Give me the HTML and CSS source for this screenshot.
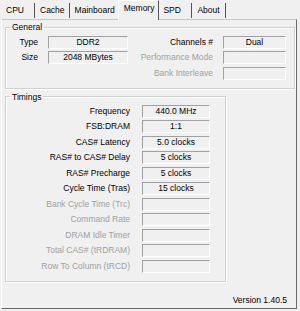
FILE: index.html
```html
<!DOCTYPE html>
<html lang="en">
<head>
  <meta charset="UTF-8" />
  <title>CPU-Z Memory</title>
  <link rel="stylesheet" href="styles.css">
</head>
<body>
  <div class="window">
    <!-- Tabs -->
    <div class="tabs">
      <div class="tab">CPU</div>
      <div class="tab">Cache</div>
      <div class="tab">Mainboard</div>
      <div class="tab active">Memory</div>
      <div class="tab">SPD</div>
      <div class="tab">About</div>
    </div>

    <div class="panel">
      <!-- General -->
      <fieldset class="group general">
        <legend>General</legend>
        <div class="general-grid">
          <span class="label">Type</span>
          <span class="field">DDR2</span>
          <span class="label">Channels #</span>
          <span class="field">Dual</span>

          <span class="label">Size</span>
          <span class="field">2048 MBytes</span>
          <span class="label off">Performance Mode</span>
          <span class="field"></span>

          <span></span>
          <span></span>
          <span class="label off">Bank Interleave</span>
          <span class="field"></span>
        </div>
      </fieldset>

      <!-- Timings -->
      <fieldset class="group timings">
        <legend>Timings</legend>
        <div class="timings-grid">
          <span class="label">Frequency</span><span class="field">440.0 MHz</span>
          <span class="label">FSB:DRAM</span><span class="field">1:1</span>
          <span class="label">CAS# Latency</span><span class="field">5.0 clocks</span>
          <span class="label">RAS# to CAS# Delay</span><span class="field">5 clocks</span>
          <span class="label">RAS# Precharge</span><span class="field">5 clocks</span>
          <span class="label">Cycle Time (Tras)</span><span class="field">15 clocks</span>
          <span class="label off">Bank Cycle Time (Trc)</span><span class="field"></span>
          <span class="label off">Command Rate</span><span class="field"></span>
          <span class="label off">DRAM Idle Timer</span><span class="field"></span>
          <span class="label off">Total CAS# (tRDRAM)</span><span class="field"></span>
          <span class="label off">Row To Column (tRCD)</span><span class="field"></span>
        </div>
      </fieldset>

      <div class="version">Version 1.40.5</div>
    </div>
  </div>
</body>
</html>
```

FILE: styles.css
```css
body {
  margin: 0;
  background-color: #f0f0f0;
  font-family: "Liberation Sans", Arial, sans-serif;
  font-size: 8.5px;
  color: #000;
}

.window {
  width: 300px;
  height: 311px;
}

.tabs {
  display: flex;
  align-items: flex-start;
  height: 19px;
  padding-left: 1px;
  position: relative;
  z-index: 1;
}

.tab {
  margin-top: 3px;
  height: 15px;
  line-height: 15px;
  min-width: 34px;
  box-sizing: border-box;
  padding: 0 4px 0 5px;
  border-right: 1px solid #555;
  white-space: nowrap;
}

.tab.active {
  margin: 0 -1px 0 -2px;
  height: 20px;
  line-height: 15px;
  border-left: 1px solid #fff;
  border-top: 1px solid #fff;
  background-color: #f0f0f0;
}

.panel {
  margin-left: 1px;
  width: 296px;
  height: 290px;
  box-sizing: border-box;
  border: 1px solid;
  border-color: #c8c8c8 #6a6a6a #6a6a6a #fff;
  padding: 0 1px 0 3px;
}

.group {
  margin: 2px 0 0;
  padding: 3.5px 8px 8px 0;
  border: 1px solid #d0d0d0;
  box-shadow: inset 1px 1px #fff, 1px 1px #fff;
  min-width: 0;
}

.group legend {
  margin-left: 4px;
  padding: 0 2px;
  line-height: 10px;
}

.general-grid {
  display: grid;
  grid-template-columns: 32px 80px 1fr 63px;
  grid-auto-rows: 13px;
  column-gap: 10px;
  row-gap: 2.5px;
}

.timings {
  margin-top: 3px;
  width: 221px;
  box-sizing: border-box;
  padding: 3px 15px 8px 0;
}

.timings-grid {
  display: grid;
  grid-template-columns: 124px 68px;
  grid-auto-rows: 13px;
  column-gap: 12px;
  row-gap: 2.5px;
}

.label {
  text-align: right;
  line-height: 13px;
  white-space: nowrap;
}

.label.off {
  color: #a0a0a0;
}

.field {
  box-sizing: border-box;
  border: 1px solid;
  border-color: #a0a0a0 #fff #fff #a0a0a0;
  background-color: #f0f0f0;
  text-align: center;
  line-height: 11px;
  white-space: nowrap;
}

.version {
  margin-top: 13px;
  padding-right: 8px;
  text-align: right;
  line-height: 10px;
}
```
